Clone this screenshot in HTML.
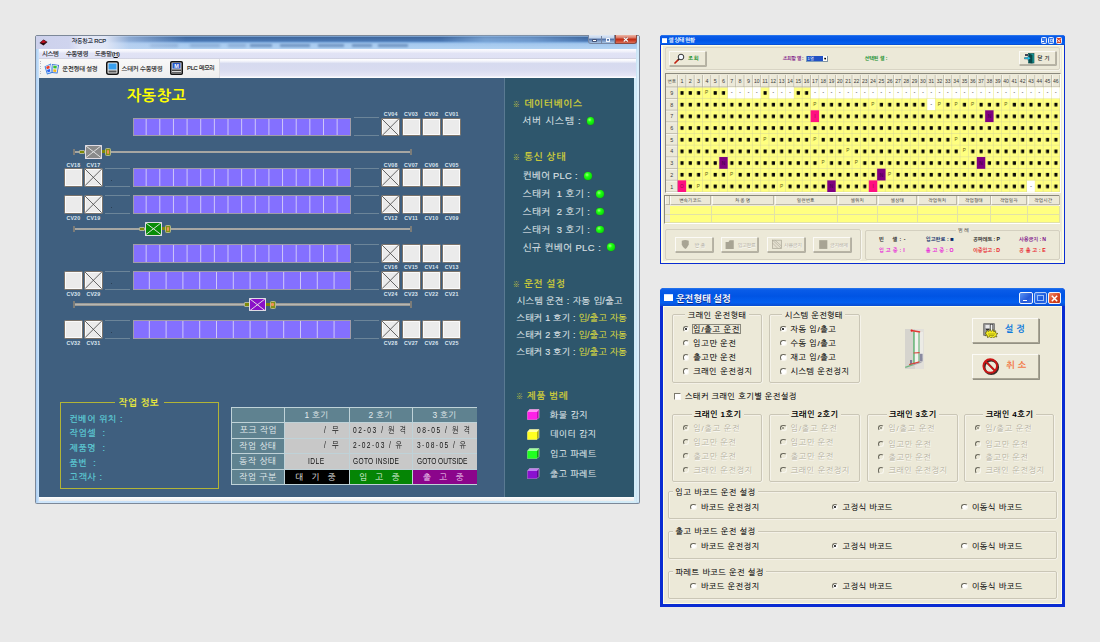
<!DOCTYPE html>
<html lang="ko"><head><meta charset="utf-8"><title>자동창고 RCP</title>
<style>
html,body{margin:0;padding:0;}
body{width:1100px;height:642px;overflow:hidden;background:#e9e9e9;position:relative;font-family:"Liberation Sans","NanumGothic",sans-serif;}
body div,body svg.a{position:absolute;}
.t{position:absolute;white-space:nowrap;line-height:1.25;}

.w7{position:absolute;box-sizing:border-box;border:.8px solid #7c8898;border-radius:2px 2px 1.5px 1.5px;background:linear-gradient(90deg,#a8ccf2,#cfe6fb .5%,#b6d6f6 50%,#d4ecf8 99.5%,#a8c8e8);}
.rack{position:absolute;box-sizing:border-box;background-color:#8470ff;border:1px solid #a09ca8;background-image:linear-gradient(90deg,transparent calc(100% - 1px),#cfc8f8 calc(100% - 1px));background-position:-1px 0;}
.cv{position:absolute;width:18.7px;height:18.7px;margin:-.2px 0 0 -.2px;box-sizing:border-box;border:1.2px solid #7a736b;border-radius:1.6px;background:#ebebeb;box-shadow:0 0 0 1px #fbfbfb inset;}
.cvl{position:absolute;width:20px;text-align:center;font-size:5.3px;font-weight:bold;letter-spacing:.15px;line-height:6px;color:#dce6f0;white-space:nowrap;}
.seg{position:absolute;box-sizing:border-box;border-top:1.3px solid #6c8599;border-bottom:1.3px solid #6c8599;}
.led{position:absolute;width:7.8px;height:7.8px;border-radius:50%;background:radial-gradient(circle at 38% 35%,#a0ff80 0,#20ff10 30%,#08e008 70%,#10a010 100%);box-shadow:0 0 0 .6px #2a6a3a;}
.tc{position:absolute;white-space:nowrap;overflow:hidden;}

.rd{position:absolute;width:6.5px;height:6.5px;border-radius:50%;box-sizing:border-box;border:1px solid;border-color:#6a685c #f8f6ee #f8f6ee #6a685c;transform:rotate(0deg);}

</style></head><body>
<div class="w7" style="left:35px;top:35px;width:604.8px;height:469.4px;">
</div>
<div style="left:36px;top:36px;width:603px;height:12.5px;background:linear-gradient(180deg,#9cc0e8 0%,#40689e 10%,#4a78b4 38%,#7eaadc 50%,#a4c8ee 60%,#b2d2f2 100%);"></div>
<div style="left:440px;top:36px;width:150px;height:7px;background:linear-gradient(90deg,rgba(160,200,240,0),rgba(160,200,240,.55) 30%,rgba(150,190,235,.5) 60%,rgba(160,200,240,0));filter:blur(1.5px);"></div>
<div style="left:250px;top:44.3px;width:22px;height:2.6px;background:#5f84b4;filter:blur(1.2px);opacity:.75"></div>
<div style="left:280px;top:44.3px;width:30px;height:2.6px;background:#5f84b4;filter:blur(1.2px);opacity:.75"></div>
<div style="left:318px;top:44.3px;width:26px;height:2.6px;background:#5f84b4;filter:blur(1.2px);opacity:.75"></div>
<div style="left:352px;top:44.3px;width:20px;height:2.6px;background:#5f84b4;filter:blur(1.2px);opacity:.75"></div>
<div style="left:378px;top:44.3px;width:30px;height:2.6px;background:#5f84b4;filter:blur(1.2px);opacity:.75"></div>
<div style="left:150px;top:44.3px;width:28px;height:2.6px;background:#7a9cc8;filter:blur(1.4px);opacity:.7"></div>
<div style="left:190px;top:44.3px;width:30px;height:2.6px;background:#7a9cc8;filter:blur(1.4px);opacity:.7"></div>
<div style="left:228px;top:44.3px;width:18px;height:2.6px;background:#7a9cc8;filter:blur(1.4px);opacity:.7"></div>
<div style="left:36px;top:36px;width:150px;height:12.5px;background:linear-gradient(90deg,#cdd1ec 0%,#cfd4ee 22%,#e4e8f6 30%,#e0e6f6 46%,rgba(190,210,240,.6) 62%,rgba(170,200,235,0) 100%);"></div>
<svg class="a" style="left:38.5px;top:38.5px" width="9" height="7" viewBox="0 0 18 14"><path d="M1 8 L9 1 L17 6 L9 13 Z" fill="#2a0a10"/><path d="M3 7 L9 2 L15 6 L9 8 Z" fill="#c01020"/></svg>
<div class="t" style="left:71.7px;top:38.4px;font-size:5.8px;color:#101828;-webkit-text-stroke:.15px #101828;letter-spacing:-0.170px;">자동창고 RCP</div>
<div style="left:588px;top:35.4px;width:27px;height:8.9px;border-radius:0 0 0 3px;background:linear-gradient(180deg,#dfe9f6 0,#c0d2ea 38%,#4a6aa2 52%,#6c8cbc 64%,#a8c4e4 100%);border:0.5px solid #7888a4;border-top:0;box-sizing:border-box;"></div>
<div style="left:614.6px;top:35.4px;width:22.4px;height:8.9px;border-radius:0 0 3px 0;background:linear-gradient(180deg,#ecb8a8 0,#dc7864 35%,#c02a12 52%,#c83a22 66%,#dc7058 100%);border:0.5px solid #8a4a40;border-top:0;box-sizing:border-box;"></div>
<div style="left:601px;top:35.6px;width:0.6px;height:8.4px;background:#7484a0"></div>
<div style="left:592.3px;top:39.4px;width:5px;height:2.2px;background:#fff;border:0.4px solid #445478;border-radius:.8px;box-sizing:border-box;"></div>
<div style="left:605.6px;top:38.2px;width:4.6px;height:3.8px;border:0.9px solid #f4f6fc;box-sizing:border-box;border-radius:.5px;"></div>
<svg class="a" style="left:623.2px;top:37.4px" width="5.6" height="5.2" viewBox="0 0 5.6 5.2"><path d="M0.7 0.6L4.9 4.6M4.9 0.6L0.7 4.6" stroke="#3a1a1a" stroke-width="2" opacity=".5"/><path d="M0.7 0.6L4.9 4.6M4.9 0.6L0.7 4.6" stroke="#fff" stroke-width="1.3"/></svg>
<div style="left:38.8px;top:48.5px;width:597.4px;height:10px;background:linear-gradient(180deg,#fcfcff 0,#f2f3fb 22%,#e1e3f5 45%,#dfe1f4 88%,#c9cad6 100%);"></div>
<div class="t" style="left:42px;top:50.2px;font-size:6.2px;color:#111;-webkit-text-stroke:.15px #111;letter-spacing:-0.284px;">시스템</div>
<div class="t" style="left:66px;top:50.2px;font-size:6.2px;color:#111;-webkit-text-stroke:.15px #111;letter-spacing:-0.266px;">수동명령</div>
<div class="t" style="left:95px;top:50.2px;font-size:6.2px;color:#111;-webkit-text-stroke:.15px #111;letter-spacing:-0.241px;">도움말(<u>H</u>)</div>
<div style="left:38.8px;top:58.5px;width:597.4px;height:19.2px;background:linear-gradient(180deg,#ffffff 0,#f6f7fc 10%,#d6daef 24%,#d9dcf0 60%,#e5e6f5 88%,#fbfbfe 96%);"></div>
<div style="left:38.8px;top:58.5px;width:181.6px;height:19.2px;background:linear-gradient(180deg,#f8f8f8,#eeeeee);border-right:1.2px solid #dcdce0;box-sizing:border-box;"></div>
<div style="left:40px;top:60.5px;width:1px;height:15px;background:repeating-linear-gradient(180deg,#b8b8c0 0 1px,transparent 1px 2.5px);"></div>
<svg class="a" style="left:43.6px;top:61.6px" width="16" height="13" viewBox="0 0 32 26"><path d="M1 9 L14 3 L16 22 L6 25 Z" fill="#2f7de0"/><path d="M16 4 L30 6 L27 23 L16 22 Z" fill="#2a6ad0"/><path d="M3 9 L13 5 L15 20 L7 23 Z" fill="#dfeaff"/><path d="M17 5.5 L28 7 L26 21 L17 20.5 Z" fill="#e8f0ff"/><path d="M4.4 9.6 L10.6 7 L11.4 12.4 L5.6 14.6 Z" fill="#f03a20"/><path d="M6 16 L11.8 14 L12.6 19 L7.4 21 Z" fill="#2a62f0"/><path d="M18.6 7 L25.6 8 L25 13 L18.6 12.4 Z" fill="#38c030"/><path d="M18.6 14.4 L24.8 15 L24.2 20 L18.6 19.6 Z" fill="#f8b818"/></svg>
<div class="t" style="left:62.3px;top:64.6px;font-size:6.2px;color:#111;-webkit-text-stroke:.15px #111;letter-spacing:-0.204px;">운전형태 설정</div>
<svg class="a" style="left:105.5px;top:61px" width="13" height="14" viewBox="0 0 26 28"><rect x="1.5" y="1.5" width="23" height="25" rx="4" fill="#e8e8e8" stroke="#111" stroke-width="3"/><rect x="5" y="5" width="16" height="12" fill="#38a0f0"/><rect x="5" y="19" width="16" height="4" fill="#555"/></svg>
<div class="t" style="left:121.6px;top:64.6px;font-size:6.2px;color:#111;-webkit-text-stroke:.15px #111;letter-spacing:-0.180px;">스태커 수동명령</div>
<svg class="a" style="left:170px;top:61px" width="13" height="14" viewBox="0 0 26 28"><rect x="1.5" y="1.5" width="23" height="25" rx="2" fill="#d8d8d8" stroke="#111" stroke-width="3"/><rect x="5" y="4" width="16" height="11" fill="#2858c8"/><text x="13" y="13.5" font-size="11" font-weight="bold" fill="#fff" text-anchor="middle" font-family="Liberation Sans, sans-serif">M</text><rect x="4" y="17" width="18" height="3" fill="#444"/><rect x="4" y="22" width="18" height="3" fill="#666"/></svg>
<div class="t" style="left:187px;top:64.8px;font-size:5.8px;color:#111;-webkit-text-stroke:.15px #111;letter-spacing:-0.236px;">PLC 메모리</div>
<div style="left:39px;top:496.8px;width:595.4px;height:4.2px;background:linear-gradient(180deg,#fdfdfd,#ececec);"></div>
<div style="left:636.8px;top:36px;width:2.4px;height:466px;background:linear-gradient(180deg,#c8e4f8,#e0f2fc 10%,#d8ecf8);"></div>
<div style="left:38.8px;top:78px;width:595.2px;height:418.6px;background:#3f5f7f;"></div>
<div style="left:503.7px;top:78px;width:130.3px;height:418.6px;background:#2e566c;border-left:1px solid #5a7a92;box-sizing:border-box;"></div>
<div class="t" style="left:127px;top:86.2px;font-size:15.2px;font-weight:bold;color:#ffff00;letter-spacing:0.573px;">자동창고</div>
<div class="rack" style="left:132.9px;top:117.6px;width:218.5px;height:18.8px;background-size:13.6562px 100%;"></div>
<div class="rack" style="left:132.9px;top:168.2px;width:218.5px;height:18.8px;background-size:13.6562px 100%;"></div>
<div class="rack" style="left:132.9px;top:195.1px;width:218.5px;height:18.8px;background-size:13.6562px 100%;"></div>
<div class="rack" style="left:132.9px;top:244.1px;width:218.5px;height:18.8px;background-size:13.6562px 100%;"></div>
<div class="rack" style="left:132.9px;top:271px;width:218.5px;height:18.8px;background-size:16.8077px 100%;"></div>
<div class="rack" style="left:132.9px;top:320.2px;width:218.5px;height:18.8px;background-size:16.8077px 100%;"></div>
<div class="cv" style="left:64.4px;top:168.5px;"></div>
<div class="cvl" style="left:63.4px;top:161.7px;">CV18</div>
<div class="cv" style="left:84.4px;top:168.5px;"><svg width="100%" height="100%" viewBox="0 0 16 16" preserveAspectRatio="none" style="display:block"><path d="M0 0L16 16M16 0L0 16" stroke="#4a4a4a" stroke-width=".8" fill="none"/></svg></div>
<div class="cvl" style="left:83.4px;top:161.7px;">CV17</div>
<div class="seg" style="left:105px;top:167.6px;width:24.6px;height:19.6px;"></div>
<div style="left:111.2px;top:180px;width:0.8px;height:0.8px;background:#2a3f55"></div>
<div class="cv" style="left:64.4px;top:195.6px;"></div>
<div class="cvl" style="left:63.4px;top:215.4px;">CV20</div>
<div class="cv" style="left:84.4px;top:195.6px;"><svg width="100%" height="100%" viewBox="0 0 16 16" preserveAspectRatio="none" style="display:block"><path d="M0 0L16 16M16 0L0 16" stroke="#4a4a4a" stroke-width=".8" fill="none"/></svg></div>
<div class="cvl" style="left:83.4px;top:215.4px;">CV19</div>
<div class="seg" style="left:105px;top:194.7px;width:24.6px;height:19.6px;"></div>
<div style="left:111.2px;top:207.1px;width:0.8px;height:0.8px;background:#2a3f55"></div>
<div class="cv" style="left:64.4px;top:271.4px;"></div>
<div class="cvl" style="left:63.4px;top:291.2px;">CV30</div>
<div class="cv" style="left:84.4px;top:271.4px;"><svg width="100%" height="100%" viewBox="0 0 16 16" preserveAspectRatio="none" style="display:block"><path d="M0 0L16 16M16 0L0 16" stroke="#4a4a4a" stroke-width=".8" fill="none"/></svg></div>
<div class="cvl" style="left:83.4px;top:291.2px;">CV29</div>
<div class="seg" style="left:105px;top:270.5px;width:24.6px;height:19.6px;"></div>
<div style="left:111.2px;top:282.9px;width:0.8px;height:0.8px;background:#2a3f55"></div>
<div class="cv" style="left:64.4px;top:320.5px;"></div>
<div class="cvl" style="left:63.4px;top:340.3px;">CV32</div>
<div class="cv" style="left:84.4px;top:320.5px;"><svg width="100%" height="100%" viewBox="0 0 16 16" preserveAspectRatio="none" style="display:block"><path d="M0 0L16 16M16 0L0 16" stroke="#4a4a4a" stroke-width=".8" fill="none"/></svg></div>
<div class="cvl" style="left:83.4px;top:340.3px;">CV31</div>
<div class="seg" style="left:105px;top:319.6px;width:24.6px;height:19.6px;"></div>
<div style="left:111.2px;top:332px;width:0.8px;height:0.8px;background:#2a3f55"></div>
<div class="cv" style="left:381.6px;top:117.8px;"><svg width="100%" height="100%" viewBox="0 0 16 16" preserveAspectRatio="none" style="display:block"><path d="M0 0L16 16M16 0L0 16" stroke="#4a4a4a" stroke-width=".8" fill="none"/></svg></div>
<div class="cvl" style="left:380.6px;top:111px;">CV04</div>
<div class="cv" style="left:402px;top:117.8px;"></div>
<div class="cvl" style="left:401px;top:111px;">CV03</div>
<div class="cv" style="left:422.4px;top:117.8px;"></div>
<div class="cvl" style="left:421.4px;top:111px;">CV02</div>
<div class="cv" style="left:442.6px;top:117.8px;"></div>
<div class="cvl" style="left:441.6px;top:111px;">CV01</div>
<div class="seg" style="left:354.2px;top:116.9px;width:25px;height:19.6px;"></div>
<div class="cv" style="left:381.6px;top:168.5px;"><svg width="100%" height="100%" viewBox="0 0 16 16" preserveAspectRatio="none" style="display:block"><path d="M0 0L16 16M16 0L0 16" stroke="#4a4a4a" stroke-width=".8" fill="none"/></svg></div>
<div class="cvl" style="left:380.6px;top:161.7px;">CV08</div>
<div class="cv" style="left:402px;top:168.5px;"></div>
<div class="cvl" style="left:401px;top:161.7px;">CV07</div>
<div class="cv" style="left:422.4px;top:168.5px;"></div>
<div class="cvl" style="left:421.4px;top:161.7px;">CV06</div>
<div class="cv" style="left:442.6px;top:168.5px;"></div>
<div class="cvl" style="left:441.6px;top:161.7px;">CV05</div>
<div class="seg" style="left:354.2px;top:167.6px;width:25px;height:19.6px;"></div>
<div class="cv" style="left:381.6px;top:195.6px;"><svg width="100%" height="100%" viewBox="0 0 16 16" preserveAspectRatio="none" style="display:block"><path d="M0 0L16 16M16 0L0 16" stroke="#4a4a4a" stroke-width=".8" fill="none"/></svg></div>
<div class="cvl" style="left:380.6px;top:215.4px;">CV12</div>
<div class="cv" style="left:402px;top:195.6px;"></div>
<div class="cvl" style="left:401px;top:215.4px;">CV11</div>
<div class="cv" style="left:422.4px;top:195.6px;"></div>
<div class="cvl" style="left:421.4px;top:215.4px;">CV10</div>
<div class="cv" style="left:442.6px;top:195.6px;"></div>
<div class="cvl" style="left:441.6px;top:215.4px;">CV09</div>
<div class="seg" style="left:354.2px;top:194.7px;width:25px;height:19.6px;"></div>
<div class="cv" style="left:381.6px;top:244.6px;"><svg width="100%" height="100%" viewBox="0 0 16 16" preserveAspectRatio="none" style="display:block"><path d="M0 0L16 16M16 0L0 16" stroke="#4a4a4a" stroke-width=".8" fill="none"/></svg></div>
<div class="cvl" style="left:380.6px;top:264.4px;">CV16</div>
<div class="cv" style="left:402px;top:244.6px;"></div>
<div class="cvl" style="left:401px;top:264.4px;">CV15</div>
<div class="cv" style="left:422.4px;top:244.6px;"></div>
<div class="cvl" style="left:421.4px;top:264.4px;">CV14</div>
<div class="cv" style="left:442.6px;top:244.6px;"></div>
<div class="cvl" style="left:441.6px;top:264.4px;">CV13</div>
<div class="seg" style="left:354.2px;top:243.7px;width:25px;height:19.6px;"></div>
<div class="cv" style="left:381.6px;top:271.4px;"><svg width="100%" height="100%" viewBox="0 0 16 16" preserveAspectRatio="none" style="display:block"><path d="M0 0L16 16M16 0L0 16" stroke="#4a4a4a" stroke-width=".8" fill="none"/></svg></div>
<div class="cvl" style="left:380.6px;top:291.2px;">CV24</div>
<div class="cv" style="left:402px;top:271.4px;"></div>
<div class="cvl" style="left:401px;top:291.2px;">CV23</div>
<div class="cv" style="left:422.4px;top:271.4px;"></div>
<div class="cvl" style="left:421.4px;top:291.2px;">CV22</div>
<div class="cv" style="left:442.6px;top:271.4px;"></div>
<div class="cvl" style="left:441.6px;top:291.2px;">CV21</div>
<div class="seg" style="left:354.2px;top:270.5px;width:25px;height:19.6px;"></div>
<div class="cv" style="left:381.6px;top:320.5px;"><svg width="100%" height="100%" viewBox="0 0 16 16" preserveAspectRatio="none" style="display:block"><path d="M0 0L16 16M16 0L0 16" stroke="#4a4a4a" stroke-width=".8" fill="none"/></svg></div>
<div class="cvl" style="left:380.6px;top:340.3px;">CV28</div>
<div class="cv" style="left:402px;top:320.5px;"></div>
<div class="cvl" style="left:401px;top:340.3px;">CV27</div>
<div class="cv" style="left:422.4px;top:320.5px;"></div>
<div class="cvl" style="left:421.4px;top:340.3px;">CV26</div>
<div class="cv" style="left:442.6px;top:320.5px;"></div>
<div class="cvl" style="left:441.6px;top:340.3px;">CV25</div>
<div class="seg" style="left:354.2px;top:319.6px;width:25px;height:19.6px;"></div>
<div style="left:73.6px;top:150.65px;width:337.4px;height:2.5px;background:linear-gradient(180deg,#80807c,#b6b6b2 35%,#b6b6b2 65%,#80807c);"></div><div style="left:72.8px;top:148.6px;width:1.8px;height:6.6px;background:#bcbcb8;border:.4px solid #7c7c78;box-sizing:border-box;"></div><div style="left:410.1px;top:148.6px;width:1.8px;height:6.6px;background:#bcbcb8;border:.4px solid #7c7c78;box-sizing:border-box;"></div><div style="left:79.4px;top:149.7px;width:5.8px;height:4.4px;background:#7e8a08;border:.6px solid #b0b49a;border-radius:1px;box-sizing:border-box;"></div><div style="left:101.8px;top:150.4px;width:4px;height:3px;background:#7e8a08;"></div><div style="left:105.1px;top:147.9px;width:6.2px;height:8px;background:#849018;border:.7px solid #b4b88a;border-radius:1.4px;box-sizing:border-box;"></div><div style="left:107px;top:150px;width:2.2px;height:3.8px;background:#f49058;border-radius:1px;"></div><div class="a" style="left:84.9px;top:145.1px;width:16.9px;height:13.5px;box-sizing:border-box;border:.9px solid #e0dce4;border-radius:.5px;background:#8a8a8a;"><svg width="100%" height="100%" viewBox="0 0 14 11" preserveAspectRatio="none" style="display:block"><path d="M0 0L14 11M14 0L0 11" stroke="#e4e4e4" stroke-width=".9" fill="none"/></svg></div>
<div style="left:73.6px;top:227.55px;width:337.4px;height:2.5px;background:linear-gradient(180deg,#80807c,#b6b6b2 35%,#b6b6b2 65%,#80807c);"></div><div style="left:72.8px;top:225.5px;width:1.8px;height:6.6px;background:#bcbcb8;border:.4px solid #7c7c78;box-sizing:border-box;"></div><div style="left:410.1px;top:225.5px;width:1.8px;height:6.6px;background:#bcbcb8;border:.4px solid #7c7c78;box-sizing:border-box;"></div><div style="left:139.4px;top:226.6px;width:5.8px;height:4.4px;background:#7e8a08;border:.6px solid #b0b49a;border-radius:1px;box-sizing:border-box;"></div><div style="left:161.8px;top:227.3px;width:4px;height:3px;background:#7e8a08;"></div><div style="left:165.1px;top:224.8px;width:6.2px;height:8px;background:#849018;border:.7px solid #b4b88a;border-radius:1.4px;box-sizing:border-box;"></div><div style="left:167px;top:226.9px;width:2.2px;height:3.8px;background:#f49058;border-radius:1px;"></div><div class="a" style="left:144.9px;top:222px;width:16.9px;height:13.5px;box-sizing:border-box;border:.9px solid #e0dce4;border-radius:.5px;background:#088c08;"><svg width="100%" height="100%" viewBox="0 0 14 11" preserveAspectRatio="none" style="display:block"><path d="M0 0L14 11M14 0L0 11" stroke="#e4e4e4" stroke-width=".9" fill="none"/></svg></div>
<div style="left:73.6px;top:303.25px;width:337.4px;height:2.5px;background:linear-gradient(180deg,#80807c,#b6b6b2 35%,#b6b6b2 65%,#80807c);"></div><div style="left:72.8px;top:301.2px;width:1.8px;height:6.6px;background:#bcbcb8;border:.4px solid #7c7c78;box-sizing:border-box;"></div><div style="left:410.1px;top:301.2px;width:1.8px;height:6.6px;background:#bcbcb8;border:.4px solid #7c7c78;box-sizing:border-box;"></div><div style="left:243.8px;top:302.3px;width:5.8px;height:4.4px;background:#7e8a08;border:.6px solid #b0b49a;border-radius:1px;box-sizing:border-box;"></div><div style="left:266.2px;top:303px;width:4px;height:3px;background:#7e8a08;"></div><div style="left:269.5px;top:300.5px;width:6.2px;height:8px;background:#849018;border:.7px solid #b4b88a;border-radius:1.4px;box-sizing:border-box;"></div><div style="left:271.4px;top:302.6px;width:2.2px;height:3.8px;background:#f49058;border-radius:1px;"></div><div class="a" style="left:249.3px;top:297.7px;width:16.9px;height:13.5px;box-sizing:border-box;border:.9px solid #e0dce4;border-radius:.5px;background:#8a10c8;"><svg width="100%" height="100%" viewBox="0 0 14 11" preserveAspectRatio="none" style="display:block"><path d="M0 0L14 11M14 0L0 11" stroke="#e4e4e4" stroke-width=".9" fill="none"/></svg></div>
<div class="t" style="left:512.5px;top:97.5px;font-size:9.6px;font-weight:bold;color:#c8c83c;letter-spacing:0.736px;"><span style="font-size:8px;font-weight:normal">※</span> 데이터베이스</div>
<div class="t" style="left:522.3px;top:115.4px;font-size:9.4px;color:#dce0e4;-webkit-text-stroke:.15px #dce0e4;letter-spacing:0.926px;">서버 시스템 :</div>
<div class="led" style="left:586.5px;top:116.8px;"></div>
<div class="t" style="left:512.5px;top:150.5px;font-size:9.6px;font-weight:bold;color:#c8c83c;letter-spacing:0.637px;"><span style="font-size:8px;font-weight:normal">※</span> 통신 상태</div>
<div class="t" style="left:522.7px;top:170.4px;font-size:9.4px;color:#dce0e4;-webkit-text-stroke:.15px #dce0e4;letter-spacing:0.311px;">컨베어 PLC :</div>
<div class="led" style="left:583.8px;top:171.8px;"></div>
<div class="t" style="left:522.7px;top:188.4px;font-size:9.4px;color:#dce0e4;-webkit-text-stroke:.15px #dce0e4;letter-spacing:0.490px;">스태커&nbsp; 1 호기 :</div>
<div class="led" style="left:596.1px;top:189.8px;"></div>
<div class="t" style="left:522.7px;top:206.3px;font-size:9.4px;color:#dce0e4;-webkit-text-stroke:.15px #dce0e4;letter-spacing:0.490px;">스태커&nbsp; 2 호기 :</div>
<div class="led" style="left:596.1px;top:207.7px;"></div>
<div class="t" style="left:522.7px;top:224.2px;font-size:9.4px;color:#dce0e4;-webkit-text-stroke:.15px #dce0e4;letter-spacing:0.490px;">스태커&nbsp; 3 호기 :</div>
<div class="led" style="left:596.1px;top:225.6px;"></div>
<div class="t" style="left:522.7px;top:241.8px;font-size:9.4px;color:#dce0e4;-webkit-text-stroke:.15px #dce0e4;letter-spacing:0.489px;">신규 컨베어 PLC :</div>
<div class="led" style="left:606.8px;top:243.1px;"></div>
<div class="t" style="left:512.5px;top:277.9px;font-size:9.6px;font-weight:bold;color:#c8c83c;letter-spacing:0.595px;"><span style="font-size:8px;font-weight:normal">※</span> 운전 설정</div>
<div class="t" style="left:516.5px;top:296px;font-size:9px;color:#dce0e4;-webkit-text-stroke:.15px;letter-spacing:0.431px;">시스템 운전 : 자동 입/출고</div>
<div class="t" style="left:516.5px;top:313px;font-size:9px;color:#dce0e4;-webkit-text-stroke:.15px;letter-spacing:0.188px;">스태커 1 호기 : <span style="color:#d8d840">입/출고 자동</span></div>
<div class="t" style="left:516.5px;top:329.8px;font-size:9px;color:#dce0e4;-webkit-text-stroke:.15px;letter-spacing:0.188px;">스태커 2 호기 : <span style="color:#d8d840">입/출고 자동</span></div>
<div class="t" style="left:516.5px;top:346.6px;font-size:9px;color:#dce0e4;-webkit-text-stroke:.15px;letter-spacing:0.188px;">스태커 3 호기 : <span style="color:#d8d840">입/출고 자동</span></div>
<div class="t" style="left:515.7px;top:390.4px;font-size:9.4px;font-weight:bold;color:#c8c83c;letter-spacing:0.614px;"><span style="font-size:8px;font-weight:normal">※</span> 제품 범례</div>
<svg class="a" style="left:527px;top:409.2px" width="12.5" height="11" viewBox="0 0 25 22"><path d="M1 6 L5 1 L24 1 L24 17 L20 21 L1 21 Z" fill="#c010b0" stroke="#d8d8d8" stroke-width="1.2"/><path d="M1 6 L5 1 L24 1 L20 6 Z" fill="#ff90f4"/><rect x="1" y="6" width="19" height="15" fill="#ff20e8"/></svg>
<div class="t" style="left:550px;top:409.8px;font-size:8.8px;color:#dce0e4;-webkit-text-stroke:.15px;letter-spacing:0.494px;">화물 감지</div>
<svg class="a" style="left:527px;top:428.8px" width="12.5" height="11" viewBox="0 0 25 22"><path d="M1 6 L5 1 L24 1 L24 17 L20 21 L1 21 Z" fill="#b0b010" stroke="#d8d8d8" stroke-width="1.2"/><path d="M1 6 L5 1 L24 1 L20 6 Z" fill="#ffffa0"/><rect x="1" y="6" width="19" height="15" fill="#ffff20"/></svg>
<div class="t" style="left:550px;top:429.4px;font-size:8.8px;color:#dce0e4;-webkit-text-stroke:.15px;letter-spacing:0.434px;">데이터 감지</div>
<svg class="a" style="left:527px;top:448.4px" width="12.5" height="11" viewBox="0 0 25 22"><path d="M1 6 L5 1 L24 1 L24 17 L20 21 L1 21 Z" fill="#10a010" stroke="#d8d8d8" stroke-width="1.2"/><path d="M1 6 L5 1 L24 1 L20 6 Z" fill="#a0ffa0"/><rect x="1" y="6" width="19" height="15" fill="#20ff20"/></svg>
<div class="t" style="left:550px;top:449px;font-size:8.8px;color:#dce0e4;-webkit-text-stroke:.15px;letter-spacing:0.517px;">입고 파레트</div>
<svg class="a" style="left:527px;top:468px" width="12.5" height="11" viewBox="0 0 25 22"><path d="M1 6 L5 1 L24 1 L24 17 L20 21 L1 21 Z" fill="#5a0890" stroke="#d8d8d8" stroke-width="1.2"/><path d="M1 6 L5 1 L24 1 L20 6 Z" fill="#c080f0"/><rect x="1" y="6" width="19" height="15" fill="#8a10d0"/></svg>
<div class="t" style="left:550px;top:468.6px;font-size:8.8px;color:#dce0e4;-webkit-text-stroke:.15px;letter-spacing:0.517px;">출고 파레트</div>
<div style="left:60.4px;top:402px;width:158.4px;height:86.7px;border:1.3px solid #b2b436;box-sizing:border-box;"></div>
<div style="left:114.5px;top:400px;width:49px;height:5px;background:#3f5f7f;"></div>
<div class="t" style="left:118.8px;top:397.2px;font-size:9.4px;font-weight:bold;color:#e8e83c;letter-spacing:0.468px;">작업 정보</div>
<div class="t" style="left:69.5px;top:413.6px;font-size:8.8px;color:#5ecdd6;-webkit-text-stroke:.22px #5ecdd6;letter-spacing:0.602px;">컨베어 위치 :</div>
<div class="t" style="left:69.5px;top:428.3px;font-size:8.8px;color:#5ecdd6;-webkit-text-stroke:.22px #5ecdd6;letter-spacing:0.643px;">작업셀&nbsp; :</div>
<div class="t" style="left:69.5px;top:443px;font-size:8.8px;color:#5ecdd6;-webkit-text-stroke:.22px #5ecdd6;letter-spacing:0.643px;">제품명&nbsp; :</div>
<div class="t" style="left:69.5px;top:457.7px;font-size:8.8px;color:#5ecdd6;-webkit-text-stroke:.22px #5ecdd6;letter-spacing:0.565px;">품번&nbsp; :</div>
<div class="t" style="left:69.5px;top:472.4px;font-size:8.8px;color:#5ecdd6;-webkit-text-stroke:.22px #5ecdd6;letter-spacing:0.699px;">고객사 :</div>
<div style="left:230.8px;top:407px;width:246.6px;height:78px;background:#bfd2d8;"></div>
<div style="left:231.6px;top:408px;width:52.8px;height:13.9px;background:#5f8290;color:#e4ecee;"></div>
<div style="left:285.4px;top:408px;width:63.2px;height:13.9px;background:#5f8290;color:#e4ecee;"></div>
<div style="left:349.6px;top:408px;width:62.7px;height:13.9px;background:#5f8290;color:#e4ecee;"></div>
<div style="left:413.3px;top:408px;width:63.3px;height:13.9px;background:#5f8290;color:#e4ecee;"></div>
<div style="left:231.6px;top:422.9px;width:52.8px;height:14.8px;background:#5f8290;color:#e4ecee;"></div>
<div style="left:231.6px;top:438.7px;width:52.8px;height:14.4px;background:#5f8290;color:#e4ecee;"></div>
<div style="left:231.6px;top:454.1px;width:52.8px;height:14.5px;background:#5f8290;color:#e4ecee;"></div>
<div style="left:231.6px;top:469.6px;width:52.8px;height:14.6px;background:#5f8290;color:#e4ecee;"></div>
<div style="left:285.4px;top:422.9px;width:63.2px;height:14.8px;background:#c8c8c8;color:#222;"></div>
<div style="left:349.6px;top:422.9px;width:62.7px;height:14.8px;background:#c8c8c8;color:#222;"></div>
<div style="left:413.3px;top:422.9px;width:63.3px;height:14.8px;background:#c8c8c8;color:#222;"></div>
<div style="left:285.4px;top:438.7px;width:63.2px;height:14.4px;background:#c8c8c8;color:#222;"></div>
<div style="left:349.6px;top:438.7px;width:62.7px;height:14.4px;background:#c8c8c8;color:#222;"></div>
<div style="left:413.3px;top:438.7px;width:63.3px;height:14.4px;background:#c8c8c8;color:#222;"></div>
<div style="left:285.4px;top:454.1px;width:63.2px;height:14.5px;background:#c8c8c8;color:#222;"></div>
<div style="left:349.6px;top:454.1px;width:62.7px;height:14.5px;background:#c8c8c8;color:#222;"></div>
<div style="left:413.3px;top:454.1px;width:63.3px;height:14.5px;background:#c8c8c8;color:#222;"></div>
<div style="left:285.4px;top:469.6px;width:63.2px;height:14.6px;background:#000;"></div>
<div style="left:349.6px;top:469.6px;width:62.7px;height:14.6px;background:#058505;"></div>
<div style="left:413.3px;top:469.6px;width:63.3px;height:14.6px;background:#8b058b;"></div>
<div class="t" style="left:304.5px;top:409.55px;font-size:8.4px;color:#e4ecee;letter-spacing:0.316px;">1 호기</div>
<div class="t" style="left:368.45px;top:409.55px;font-size:8.4px;color:#e4ecee;letter-spacing:0.316px;">2 호기</div>
<div class="t" style="left:432.45px;top:409.55px;font-size:8.4px;color:#e4ecee;letter-spacing:0.316px;">3 호기</div>
<div class="t" style="left:239.8px;top:425.1px;font-size:8.8px;color:#e4ecee;letter-spacing:0.294px;">포크 작업</div>
<div class="t" style="left:239px;top:440.7px;font-size:8.8px;color:#e4ecee;letter-spacing:0.454px;">작업 상태</div>
<div class="t" style="left:239px;top:456.15px;font-size:8.8px;color:#e4ecee;letter-spacing:0.454px;">동작 상태</div>
<div class="t" style="left:239px;top:471.7px;font-size:8.8px;color:#e4ecee;letter-spacing:0.454px;">작업 구분</div>
<div class="t" style="left:324px;top:426.8px;font-size:6.6px;color:#111;transform:scale(1,1.26);transform-origin:0 60%;letter-spacing:2.178px;">/ <span style="font-size:7px;line-height:0">무</span></div>
<div class="t" style="left:324px;top:442.4px;font-size:6.6px;color:#111;transform:scale(1,1.26);transform-origin:0 60%;letter-spacing:2.178px;">/ <span style="font-size:7px;line-height:0">무</span></div>
<div class="t" style="left:307.9px;top:457.85px;font-size:6.6px;color:#111;transform:scale(1,1.26);transform-origin:0 60%;letter-spacing:0.532px;">IDLE</div>
<div class="t" style="left:353.1px;top:426.8px;font-size:6.6px;color:#111;transform:scale(1,1.26);transform-origin:0 60%;letter-spacing:1.563px;">02-03 / <span style="font-size:7px;line-height:0">원</span> <span style="font-size:7px;line-height:0">격</span></div>
<div class="t" style="left:417px;top:426.8px;font-size:6.6px;color:#111;transform:scale(1,1.26);transform-origin:0 60%;letter-spacing:1.563px;">08-05 / <span style="font-size:7px;line-height:0">원</span> <span style="font-size:7px;line-height:0">격</span></div>
<div class="t" style="left:353.1px;top:442.4px;font-size:6.6px;color:#111;transform:scale(1,1.26);transform-origin:0 60%;letter-spacing:1.416px;">2-02-03 / <span style="font-size:7px;line-height:0">유</span></div>
<div class="t" style="left:417px;top:442.4px;font-size:6.6px;color:#111;transform:scale(1,1.26);transform-origin:0 60%;letter-spacing:1.416px;">3-08-05 / <span style="font-size:7px;line-height:0">유</span></div>
<div class="t" style="left:353.1px;top:457.85px;font-size:6.6px;color:#111;transform:scale(1,1.26);transform-origin:0 60%;letter-spacing:0.280px;">GOTO INSIDE</div>
<div class="t" style="left:417px;top:457.85px;font-size:6.6px;color:#111;transform:scale(1,1.26);transform-origin:0 60%;letter-spacing:-0.003px;">GOTO OUTSIDE</div>
<div class="t" style="left:295.1px;top:471.5px;font-size:8.4px;color:#f0f0f0;letter-spacing:1.266px;">대&nbsp; 기&nbsp; 중</div>
<div class="t" style="left:359.05px;top:471.5px;font-size:8.4px;color:#e8f8e8;letter-spacing:1.266px;">입&nbsp; 고&nbsp; 중</div>
<div class="t" style="left:423.05px;top:471.5px;font-size:8.4px;color:#f4d8f4;letter-spacing:1.266px;">출&nbsp; 고&nbsp; 중</div>
<div style="left:659.9px;top:34.8px;width:405.2px;height:229.2px;background:#0a2cd2;border-radius:3px 3px 0 0;"></div><div style="left:659.9px;top:34.8px;width:405.2px;height:10.2px;border-radius:3px 3px 0 0;background:linear-gradient(180deg,#3a86f0 0%,#0a5ae8 12%,#0054e4 50%,#0660f0 85%,#0a48c8 100%);"></div>
<div style="left:661.2px;top:45.1px;width:402.6px;height:217.5px;background:#fdfde2;"></div>
<div style="left:662.9px;top:46px;width:399.2px;height:214.8px;background:#ece9d8;"></div>
<div style="left:662.1px;top:38.3px;width:4.8px;height:3.4px;background:#fff;border-top:0.6px solid #cfe0ff;"></div>
<div class="t" style="left:668.2px;top:37px;font-size:5.6px;font-weight:bold;color:#fff;letter-spacing:-0.415px;">셀 상태 현황</div>
<div style="left:1040.6px;top:37.2px;width:6.4px;height:6.4px;background:#3c78e8;border:0.6px solid #e8eefc;border-radius:1.4px;box-sizing:border-box;"></div>
<div style="left:1048px;top:37.2px;width:6.4px;height:6.4px;background:#3c78e8;border:0.6px solid #e8eefc;border-radius:1.4px;box-sizing:border-box;"></div>
<div style="left:1055.9px;top:37.2px;width:6.4px;height:6.4px;background:#d8482c;border:0.6px solid #e8eefc;border-radius:1.4px;box-sizing:border-box;"></div>
<div style="left:1042px;top:41.2px;width:2.4px;height:1px;background:#fff;"></div>
<div style="left:1049.6px;top:38.8px;width:3.2px;height:3.2px;border:0.6px solid #9cc0f8;border-top-width:1px;box-sizing:border-box;"></div>
<svg class="a" style="left:1057.3px;top:38.6px" width="3.6" height="3.6" viewBox="0 0 6 6"><path d="M0.5 0.5L5.5 5.5M5.5 0.5L0.5 5.5" stroke="#fff" stroke-width="1.3"/></svg>
<div style="left:664.5px;top:47px;width:395px;height:23.4px;border:1px solid #d8d4c4;border-radius:2px;box-sizing:border-box;box-shadow:0.6px 0.6px 0 #fff;"></div>
<div style="left:668.5px;top:51px;width:37px;height:14.6px;background:#ece9d8;box-sizing:border-box;border-top:1px solid #fbfaf6;border-left:1px solid #fbfaf6;border-right:.8px solid #b8b4a4;border-bottom:.8px solid #b8b4a4;box-shadow:0.6px 0.6px 0 #8e8c80;"></div>
<svg class="a" style="left:673.5px;top:53px" width="11" height="11" viewBox="0 0 22 22"><path d="M2 20 L9 13" stroke="#c02010" stroke-width="3.4" stroke-linecap="round"/><path d="M8 14 L11 11" stroke="#222" stroke-width="3"/><circle cx="14" cy="8" r="5.6" fill="#f4f8ff" stroke="#333" stroke-width="2"/></svg>
<div class="t" style="left:688px;top:55.4px;font-size:5.4px;font-weight:bold;color:#0a8a1a;letter-spacing:-0.414px;">조 회</div>
<div class="t" style="left:782.7px;top:55.4px;font-size:5px;font-weight:bold;color:#80208a;letter-spacing:-0.379px;">조회할 열 :</div>
<div style="left:805.6px;top:55.5px;width:22.4px;height:6.3px;background:#fff;border:0.6px solid #7f9db9;box-sizing:border-box;"></div>
<div style="left:806.5px;top:56.4px;width:16px;height:4.5px;background:#2252c4;"></div>
<div class="t" style="left:807.6px;top:56.2px;font-size:4.2px;color:#fff;line-height:5px;">1열</div>
<div style="left:822.6px;top:56.2px;width:4.8px;height:4.9px;background:#dcd8ca;border:0.5px solid #fff;box-sizing:border-box;box-shadow:0.4px 0.4px 0 #8a887c;"></div>
<svg class="a" style="left:823.8px;top:57.8px" width="2.4" height="1.8" viewBox="0 0 4 3"><path d="M0 0H4L2 3Z" fill="#000"/></svg>
<div class="t" style="left:864.4px;top:55.4px;font-size:5px;font-weight:bold;color:#0a8a1a;letter-spacing:-0.050px;">선택된 셀 :</div>
<div style="left:1018.5px;top:51px;width:37.2px;height:14.4px;background:#ece9d8;box-sizing:border-box;border-top:1px solid #fbfaf6;border-left:1px solid #fbfaf6;border-right:.8px solid #b8b4a4;border-bottom:.8px solid #b8b4a4;box-shadow:0.6px 0.6px 0 #8e8c80;"></div>
<svg class="a" style="left:1023.5px;top:53.2px" width="11" height="10.5" viewBox="0 0 22 21"><rect x="9" y="1" width="11" height="19" fill="#18a0a0" stroke="#0a4a4a" stroke-width="1.2"/><path d="M10 1 L17 4 L17 21 L10 20 Z" fill="#084848"/><path d="M1 9 H8 V6 L13 10.5 L8 15 V12 H1 Z" fill="#28c8e8" stroke="#0a3a5a" stroke-width=".8"/><rect x="2" y="2" width="6" height="4" fill="#445"/></svg>
<div class="t" style="left:1037.6px;top:55.4px;font-size:5.4px;font-weight:bold;color:#222;letter-spacing:-0.014px;">닫 기</div>
<div style="left:664.5px;top:73.2px;width:396.46px;height:119.57px;background:#ece9d8;border:1px solid #8a887c;border-right-color:#fff;border-bottom-color:#fff;box-sizing:border-box;"></div>
<svg class="a" style="left:665.5px;top:74.5px" width="394.26" height="117.37" viewBox="0 0 394.26 117.37" font-family="Liberation Sans, NanumGothic, sans-serif"><defs><pattern id="pc" x="12.0" y="12.25" width="8.31" height="11.68" patternUnits="userSpaceOnUse"><rect width="8.31" height="11.68" fill="#ffff80"/><rect x="7.8100000000000005" width=".5" height="11.68" fill="#d8d898"/><rect y="11.18" width="8.31" height=".5" fill="#d8d898"/><rect x="2.41" y="3.99" width="3.15" height="3.45" rx=".4" fill="#050505"/></pattern><pattern id="ph" x="12.0" y="0" width="8.31" height="12.25" patternUnits="userSpaceOnUse"><rect width="8.31" height="12.25" fill="#ece9d8"/><rect width=".7" height="12.25" fill="#fbfaf4"/><rect x="7.61" width=".7" height="12.25" fill="#b4b0a0"/></pattern><pattern id="pr" x="0" y="12.25" width="12.0" height="11.68" patternUnits="userSpaceOnUse"><rect width="12.0" height="11.68" fill="#ece9d8"/><rect width="12.0" height=".7" fill="#fbfaf4"/><rect y="10.98" width="12.0" height=".7" fill="#b4b0a0"/></pattern></defs><rect x="12.0" y="12.25" width="382.26" height="105.12" fill="url(#pc)"/><rect x="12.0" y="0" width="382.26" height="12.25" fill="url(#ph)"/><rect x="0" y="12.25" width="12.0" height="105.12" fill="url(#pr)"/><rect x="0" y="0" width="12.0" height="12.25" fill="#ece9d8"/><rect x="11.3" y="0" width=".7" height="117.37" fill="#b4b0a0"/><rect x="0" y="11.55" width="394.26" height=".7" fill="#b4b0a0"/><text x="5.7" y="8.125" font-size="4.6" fill="#333" text-anchor="middle">번호</text><text x="15.96" y="8.125" font-size="5.4" fill="#3a3a3a" text-anchor="middle">1</text><text x="24.27" y="8.125" font-size="5.4" fill="#3a3a3a" text-anchor="middle">2</text><text x="32.58" y="8.125" font-size="5.4" fill="#3a3a3a" text-anchor="middle">3</text><text x="40.88" y="8.125" font-size="5.4" fill="#3a3a3a" text-anchor="middle">4</text><text x="49.20" y="8.125" font-size="5.4" fill="#3a3a3a" text-anchor="middle">5</text><text x="57.51" y="8.125" font-size="5.4" fill="#3a3a3a" text-anchor="middle">6</text><text x="65.81" y="8.125" font-size="5.4" fill="#3a3a3a" text-anchor="middle">7</text><text x="74.12" y="8.125" font-size="5.4" fill="#3a3a3a" text-anchor="middle">8</text><text x="82.44" y="8.125" font-size="5.4" fill="#3a3a3a" text-anchor="middle">9</text><text x="90.75" y="8.125" font-size="5.4" fill="#3a3a3a" text-anchor="middle" textLength="5.6" lengthAdjust="spacingAndGlyphs">10</text><text x="99.06" y="8.125" font-size="5.4" fill="#3a3a3a" text-anchor="middle" textLength="5.6" lengthAdjust="spacingAndGlyphs">11</text><text x="107.37" y="8.125" font-size="5.4" fill="#3a3a3a" text-anchor="middle" textLength="5.6" lengthAdjust="spacingAndGlyphs">12</text><text x="115.67" y="8.125" font-size="5.4" fill="#3a3a3a" text-anchor="middle" textLength="5.6" lengthAdjust="spacingAndGlyphs">13</text><text x="123.98" y="8.125" font-size="5.4" fill="#3a3a3a" text-anchor="middle" textLength="5.6" lengthAdjust="spacingAndGlyphs">14</text><text x="132.30" y="8.125" font-size="5.4" fill="#3a3a3a" text-anchor="middle" textLength="5.6" lengthAdjust="spacingAndGlyphs">15</text><text x="140.61" y="8.125" font-size="5.4" fill="#3a3a3a" text-anchor="middle" textLength="5.6" lengthAdjust="spacingAndGlyphs">16</text><text x="148.92" y="8.125" font-size="5.4" fill="#3a3a3a" text-anchor="middle" textLength="5.6" lengthAdjust="spacingAndGlyphs">17</text><text x="157.23" y="8.125" font-size="5.4" fill="#3a3a3a" text-anchor="middle" textLength="5.6" lengthAdjust="spacingAndGlyphs">18</text><text x="165.54" y="8.125" font-size="5.4" fill="#3a3a3a" text-anchor="middle" textLength="5.6" lengthAdjust="spacingAndGlyphs">19</text><text x="173.85" y="8.125" font-size="5.4" fill="#3a3a3a" text-anchor="middle" textLength="5.6" lengthAdjust="spacingAndGlyphs">20</text><text x="182.16" y="8.125" font-size="5.4" fill="#3a3a3a" text-anchor="middle" textLength="5.6" lengthAdjust="spacingAndGlyphs">21</text><text x="190.47" y="8.125" font-size="5.4" fill="#3a3a3a" text-anchor="middle" textLength="5.6" lengthAdjust="spacingAndGlyphs">22</text><text x="198.78" y="8.125" font-size="5.4" fill="#3a3a3a" text-anchor="middle" textLength="5.6" lengthAdjust="spacingAndGlyphs">23</text><text x="207.09" y="8.125" font-size="5.4" fill="#3a3a3a" text-anchor="middle" textLength="5.6" lengthAdjust="spacingAndGlyphs">24</text><text x="215.40" y="8.125" font-size="5.4" fill="#3a3a3a" text-anchor="middle" textLength="5.6" lengthAdjust="spacingAndGlyphs">25</text><text x="223.71" y="8.125" font-size="5.4" fill="#3a3a3a" text-anchor="middle" textLength="5.6" lengthAdjust="spacingAndGlyphs">26</text><text x="232.02" y="8.125" font-size="5.4" fill="#3a3a3a" text-anchor="middle" textLength="5.6" lengthAdjust="spacingAndGlyphs">27</text><text x="240.33" y="8.125" font-size="5.4" fill="#3a3a3a" text-anchor="middle" textLength="5.6" lengthAdjust="spacingAndGlyphs">28</text><text x="248.64" y="8.125" font-size="5.4" fill="#3a3a3a" text-anchor="middle" textLength="5.6" lengthAdjust="spacingAndGlyphs">29</text><text x="256.94" y="8.125" font-size="5.4" fill="#3a3a3a" text-anchor="middle" textLength="5.6" lengthAdjust="spacingAndGlyphs">30</text><text x="265.26" y="8.125" font-size="5.4" fill="#3a3a3a" text-anchor="middle" textLength="5.6" lengthAdjust="spacingAndGlyphs">31</text><text x="273.57" y="8.125" font-size="5.4" fill="#3a3a3a" text-anchor="middle" textLength="5.6" lengthAdjust="spacingAndGlyphs">32</text><text x="281.88" y="8.125" font-size="5.4" fill="#3a3a3a" text-anchor="middle" textLength="5.6" lengthAdjust="spacingAndGlyphs">33</text><text x="290.19" y="8.125" font-size="5.4" fill="#3a3a3a" text-anchor="middle" textLength="5.6" lengthAdjust="spacingAndGlyphs">34</text><text x="298.50" y="8.125" font-size="5.4" fill="#3a3a3a" text-anchor="middle" textLength="5.6" lengthAdjust="spacingAndGlyphs">35</text><text x="306.81" y="8.125" font-size="5.4" fill="#3a3a3a" text-anchor="middle" textLength="5.6" lengthAdjust="spacingAndGlyphs">36</text><text x="315.12" y="8.125" font-size="5.4" fill="#3a3a3a" text-anchor="middle" textLength="5.6" lengthAdjust="spacingAndGlyphs">37</text><text x="323.43" y="8.125" font-size="5.4" fill="#3a3a3a" text-anchor="middle" textLength="5.6" lengthAdjust="spacingAndGlyphs">38</text><text x="331.74" y="8.125" font-size="5.4" fill="#3a3a3a" text-anchor="middle" textLength="5.6" lengthAdjust="spacingAndGlyphs">39</text><text x="340.05" y="8.125" font-size="5.4" fill="#3a3a3a" text-anchor="middle" textLength="5.6" lengthAdjust="spacingAndGlyphs">40</text><text x="348.36" y="8.125" font-size="5.4" fill="#3a3a3a" text-anchor="middle" textLength="5.6" lengthAdjust="spacingAndGlyphs">41</text><text x="356.67" y="8.125" font-size="5.4" fill="#3a3a3a" text-anchor="middle" textLength="5.6" lengthAdjust="spacingAndGlyphs">42</text><text x="364.98" y="8.125" font-size="5.4" fill="#3a3a3a" text-anchor="middle" textLength="5.6" lengthAdjust="spacingAndGlyphs">43</text><text x="373.29" y="8.125" font-size="5.4" fill="#3a3a3a" text-anchor="middle" textLength="5.6" lengthAdjust="spacingAndGlyphs">44</text><text x="381.60" y="8.125" font-size="5.4" fill="#3a3a3a" text-anchor="middle" textLength="5.6" lengthAdjust="spacingAndGlyphs">45</text><text x="389.91" y="8.125" font-size="5.4" fill="#3a3a3a" text-anchor="middle" textLength="5.6" lengthAdjust="spacingAndGlyphs">46</text><text x="5.7" y="20.09" font-size="5.4" fill="#3a3a3a" text-anchor="middle">9</text><text x="5.7" y="31.77" font-size="5.4" fill="#3a3a3a" text-anchor="middle">8</text><text x="5.7" y="43.45" font-size="5.4" fill="#3a3a3a" text-anchor="middle">7</text><text x="5.7" y="55.13" font-size="5.4" fill="#3a3a3a" text-anchor="middle">6</text><text x="5.7" y="66.81" font-size="5.4" fill="#3a3a3a" text-anchor="middle">5</text><text x="5.7" y="78.49" font-size="5.4" fill="#3a3a3a" text-anchor="middle">4</text><text x="5.7" y="90.17" font-size="5.4" fill="#3a3a3a" text-anchor="middle">3</text><text x="5.7" y="101.85" font-size="5.4" fill="#3a3a3a" text-anchor="middle">2</text><text x="5.7" y="113.53" font-size="5.4" fill="#3a3a3a" text-anchor="middle">1</text><rect x="38.48" y="15.29" width="5" height="5.4" fill="#ffff80"/><text x="40.69" y="19.09" font-size="4.7" fill="#5e5e18" text-anchor="middle">P</text><rect x="61.86" y="12.25" width="7.81" height="11.18" fill="#fff"/><text x="65.81" y="19.49" font-size="4.6" font-weight="bold" fill="#666" text-anchor="middle">-</text><rect x="70.17" y="12.25" width="7.81" height="11.18" fill="#fff"/><text x="74.12" y="19.49" font-size="4.6" font-weight="bold" fill="#666" text-anchor="middle">-</text><rect x="78.48" y="12.25" width="7.81" height="11.18" fill="#fff"/><text x="82.44" y="19.49" font-size="4.6" font-weight="bold" fill="#666" text-anchor="middle">-</text><rect x="86.79" y="12.25" width="7.81" height="11.18" fill="#fff"/><text x="90.75" y="19.49" font-size="4.6" font-weight="bold" fill="#666" text-anchor="middle">-</text><rect x="103.41" y="12.25" width="7.81" height="11.18" fill="#fff"/><text x="107.37" y="19.49" font-size="4.6" font-weight="bold" fill="#666" text-anchor="middle">-</text><rect x="111.72" y="12.25" width="7.81" height="11.18" fill="#fff"/><text x="115.67" y="19.49" font-size="4.6" font-weight="bold" fill="#666" text-anchor="middle">-</text><rect x="120.03" y="12.25" width="7.81" height="11.18" fill="#fff"/><text x="123.98" y="19.49" font-size="4.6" font-weight="bold" fill="#666" text-anchor="middle">-</text><rect x="144.96" y="12.25" width="7.81" height="11.18" fill="#fff"/><text x="148.92" y="19.49" font-size="4.6" font-weight="bold" fill="#666" text-anchor="middle">-</text><rect x="153.27" y="12.25" width="7.81" height="11.18" fill="#fff"/><text x="157.23" y="19.49" font-size="4.6" font-weight="bold" fill="#666" text-anchor="middle">-</text><rect x="161.58" y="12.25" width="7.81" height="11.18" fill="#fff"/><text x="165.54" y="19.49" font-size="4.6" font-weight="bold" fill="#666" text-anchor="middle">-</text><rect x="169.89" y="12.25" width="7.81" height="11.18" fill="#fff"/><text x="173.85" y="19.49" font-size="4.6" font-weight="bold" fill="#666" text-anchor="middle">-</text><rect x="178.20" y="12.25" width="7.81" height="11.18" fill="#fff"/><text x="182.16" y="19.49" font-size="4.6" font-weight="bold" fill="#666" text-anchor="middle">-</text><rect x="186.51" y="12.25" width="7.81" height="11.18" fill="#fff"/><text x="190.47" y="19.49" font-size="4.6" font-weight="bold" fill="#666" text-anchor="middle">-</text><rect x="194.82" y="12.25" width="7.81" height="11.18" fill="#fff"/><text x="198.78" y="19.49" font-size="4.6" font-weight="bold" fill="#666" text-anchor="middle">-</text><rect x="203.13" y="12.25" width="7.81" height="11.18" fill="#fff"/><text x="207.09" y="19.49" font-size="4.6" font-weight="bold" fill="#666" text-anchor="middle">-</text><rect x="211.44" y="12.25" width="7.81" height="11.18" fill="#fff"/><text x="215.40" y="19.49" font-size="4.6" font-weight="bold" fill="#666" text-anchor="middle">-</text><rect x="219.75" y="12.25" width="7.81" height="11.18" fill="#fff"/><text x="223.71" y="19.49" font-size="4.6" font-weight="bold" fill="#666" text-anchor="middle">-</text><rect x="228.06" y="12.25" width="7.81" height="11.18" fill="#fff"/><text x="232.02" y="19.49" font-size="4.6" font-weight="bold" fill="#666" text-anchor="middle">-</text><rect x="236.37" y="12.25" width="7.81" height="11.18" fill="#fff"/><text x="240.33" y="19.49" font-size="4.6" font-weight="bold" fill="#666" text-anchor="middle">-</text><rect x="244.68" y="12.25" width="7.81" height="11.18" fill="#fff"/><text x="248.64" y="19.49" font-size="4.6" font-weight="bold" fill="#666" text-anchor="middle">-</text><rect x="252.99" y="12.25" width="7.81" height="11.18" fill="#fff"/><text x="256.94" y="19.49" font-size="4.6" font-weight="bold" fill="#666" text-anchor="middle">-</text><rect x="261.30" y="12.25" width="7.81" height="11.18" fill="#fff"/><text x="265.25" y="19.49" font-size="4.6" font-weight="bold" fill="#666" text-anchor="middle">-</text><rect x="269.61" y="12.25" width="7.81" height="11.18" fill="#fff"/><text x="273.56" y="19.49" font-size="4.6" font-weight="bold" fill="#666" text-anchor="middle">-</text><rect x="277.92" y="12.25" width="7.81" height="11.18" fill="#fff"/><text x="281.88" y="19.49" font-size="4.6" font-weight="bold" fill="#666" text-anchor="middle">-</text><rect x="286.23" y="12.25" width="7.81" height="11.18" fill="#fff"/><text x="290.19" y="19.49" font-size="4.6" font-weight="bold" fill="#666" text-anchor="middle">-</text><rect x="294.54" y="12.25" width="7.81" height="11.18" fill="#fff"/><text x="298.50" y="19.49" font-size="4.6" font-weight="bold" fill="#666" text-anchor="middle">-</text><rect x="302.85" y="12.25" width="7.81" height="11.18" fill="#fff"/><text x="306.81" y="19.49" font-size="4.6" font-weight="bold" fill="#666" text-anchor="middle">-</text><rect x="311.16" y="12.25" width="7.81" height="11.18" fill="#fff"/><text x="315.12" y="19.49" font-size="4.6" font-weight="bold" fill="#666" text-anchor="middle">-</text><rect x="319.47" y="12.25" width="7.81" height="11.18" fill="#fff"/><text x="323.43" y="19.49" font-size="4.6" font-weight="bold" fill="#666" text-anchor="middle">-</text><rect x="327.78" y="12.25" width="7.81" height="11.18" fill="#fff"/><text x="331.74" y="19.49" font-size="4.6" font-weight="bold" fill="#666" text-anchor="middle">-</text><rect x="336.09" y="12.25" width="7.81" height="11.18" fill="#fff"/><text x="340.05" y="19.49" font-size="4.6" font-weight="bold" fill="#666" text-anchor="middle">-</text><rect x="344.40" y="12.25" width="7.81" height="11.18" fill="#fff"/><text x="348.36" y="19.49" font-size="4.6" font-weight="bold" fill="#666" text-anchor="middle">-</text><rect x="352.71" y="12.25" width="7.81" height="11.18" fill="#fff"/><text x="356.67" y="19.49" font-size="4.6" font-weight="bold" fill="#666" text-anchor="middle">-</text><rect x="361.02" y="12.25" width="7.81" height="11.18" fill="#fff"/><text x="364.98" y="19.49" font-size="4.6" font-weight="bold" fill="#666" text-anchor="middle">-</text><rect x="369.33" y="12.25" width="7.81" height="11.18" fill="#fff"/><text x="373.29" y="19.49" font-size="4.6" font-weight="bold" fill="#666" text-anchor="middle">-</text><rect x="377.64" y="12.25" width="7.81" height="11.18" fill="#fff"/><text x="381.60" y="19.49" font-size="4.6" font-weight="bold" fill="#666" text-anchor="middle">-</text><rect x="385.95" y="12.25" width="7.81" height="11.18" fill="#fff"/><text x="389.91" y="19.49" font-size="4.6" font-weight="bold" fill="#666" text-anchor="middle">-</text><rect x="146.52" y="26.97" width="5" height="5.4" fill="#ffff80"/><text x="148.72" y="30.77" font-size="4.7" fill="#5e5e18" text-anchor="middle">P</text><rect x="204.69" y="26.97" width="5" height="5.4" fill="#ffff80"/><text x="206.89" y="30.77" font-size="4.7" fill="#5e5e18" text-anchor="middle">P</text><rect x="261.30" y="23.93" width="7.81" height="11.18" fill="#fff"/><text x="265.25" y="31.17" font-size="4.6" font-weight="bold" fill="#666" text-anchor="middle">-</text><rect x="271.16" y="26.97" width="5" height="5.4" fill="#ffff80"/><text x="273.37" y="30.77" font-size="4.7" fill="#5e5e18" text-anchor="middle">P</text><rect x="287.78" y="26.97" width="5" height="5.4" fill="#ffff80"/><text x="289.99" y="30.77" font-size="4.7" fill="#5e5e18" text-anchor="middle">P</text><rect x="304.40" y="26.97" width="5" height="5.4" fill="#ffff80"/><text x="306.61" y="30.77" font-size="4.7" fill="#5e5e18" text-anchor="middle">P</text><rect x="337.64" y="26.97" width="5" height="5.4" fill="#ffff80"/><text x="339.85" y="30.77" font-size="4.7" fill="#5e5e18" text-anchor="middle">P</text><rect x="144.66" y="35.31" width="8.41" height="11.78" fill="#ff1080"/><text x="148.92" y="43.25" font-size="4.8" fill="#a0084c" text-anchor="middle">I</text><rect x="319.17" y="35.31" width="8.41" height="11.78" fill="#800080"/><text x="323.43" y="43.25" font-size="4.8" fill="#3a003a" text-anchor="middle">N</text><rect x="96.66" y="62.01" width="5" height="5.4" fill="#ffff80"/><text x="98.86" y="65.81" font-size="4.7" fill="#5e5e18" text-anchor="middle">P</text><rect x="146.52" y="62.01" width="5" height="5.4" fill="#ffff80"/><text x="148.72" y="65.81" font-size="4.7" fill="#5e5e18" text-anchor="middle">P</text><rect x="287.78" y="62.01" width="5" height="5.4" fill="#ffff80"/><text x="289.99" y="65.81" font-size="4.7" fill="#5e5e18" text-anchor="middle">P</text><rect x="179.76" y="73.69" width="5" height="5.4" fill="#ffff80"/><text x="181.96" y="77.49" font-size="4.7" fill="#5e5e18" text-anchor="middle">P</text><rect x="296.09" y="73.69" width="5" height="5.4" fill="#ffff80"/><text x="298.30" y="77.49" font-size="4.7" fill="#5e5e18" text-anchor="middle">P</text><rect x="53.25" y="82.03" width="8.41" height="11.78" fill="#800080"/><text x="57.51" y="89.97" font-size="4.8" fill="#3a003a" text-anchor="middle">N</text><rect x="154.83" y="85.37" width="5" height="5.4" fill="#ffff80"/><text x="157.03" y="89.17" font-size="4.7" fill="#5e5e18" text-anchor="middle">P</text><rect x="188.07" y="85.37" width="5" height="5.4" fill="#ffff80"/><text x="190.27" y="89.17" font-size="4.7" fill="#5e5e18" text-anchor="middle">P</text><rect x="310.86" y="82.03" width="8.41" height="11.78" fill="#800080"/><text x="315.12" y="89.97" font-size="4.8" fill="#3a003a" text-anchor="middle">N</text><rect x="38.48" y="97.05" width="5" height="5.4" fill="#ffff80"/><text x="40.69" y="100.85" font-size="4.7" fill="#5e5e18" text-anchor="middle">P</text><rect x="63.41" y="97.05" width="5" height="5.4" fill="#ffff80"/><text x="65.61" y="100.85" font-size="4.7" fill="#5e5e18" text-anchor="middle">P</text><rect x="211.14" y="93.71" width="8.41" height="11.78" fill="#800080"/><text x="215.40" y="101.65" font-size="4.8" fill="#3a003a" text-anchor="middle">N</text><rect x="221.31" y="97.05" width="5" height="5.4" fill="#ffff80"/><text x="223.50" y="100.85" font-size="4.7" fill="#5e5e18" text-anchor="middle">P</text><rect x="11.70" y="105.39" width="8.41" height="11.78" fill="#ff1080"/><text x="15.96" y="113.33" font-size="4.8" fill="#a0084c" text-anchor="middle">O</text><rect x="30.17" y="108.73" width="5" height="5.4" fill="#ffff80"/><text x="32.38" y="112.53" font-size="4.7" fill="#5e5e18" text-anchor="middle">P</text><rect x="113.28" y="108.73" width="5" height="5.4" fill="#ffff80"/><text x="115.47" y="112.53" font-size="4.7" fill="#5e5e18" text-anchor="middle">P</text><rect x="161.28" y="105.39" width="8.41" height="11.78" fill="#800080"/><text x="165.54" y="113.33" font-size="4.8" fill="#3a003a" text-anchor="middle">N</text><rect x="202.83" y="105.39" width="8.41" height="11.78" fill="#ff1080"/><text x="207.09" y="113.33" font-size="4.8" fill="#a0084c" text-anchor="middle">I</text><rect x="361.02" y="105.69" width="7.81" height="11.18" fill="#fff"/><text x="364.98" y="112.93" font-size="4.6" font-weight="bold" fill="#666" text-anchor="middle">-</text></svg>
<div style="left:664px;top:195px;width:396.2px;height:28.6px;background:#ece9d8;border:1px solid #8a887c;border-right-color:#fff;border-bottom-color:#fff;box-sizing:border-box;"></div>
<div style="left:665.2px;top:205.8px;width:394.3px;height:16.8px;background:#ffff80;"></div>
<div style="left:665.2px;top:205.8px;width:4.4px;height:16.8px;background:#ece9d8;"></div>
<div style="left:665.2px;top:196.2px;width:4.4px;height:9.1px;border-left:.8px solid #fbfaf4;border-right:.8px solid #bcb8a8;border-bottom:.8px solid #bcb8a8;box-sizing:border-box;"></div>
<div style="left:670.1px;top:196.2px;width:40.9px;height:9.1px;border-left:.8px solid #fbfaf4;border-right:.8px solid #bcb8a8;border-bottom:.8px solid #bcb8a8;box-sizing:border-box;"></div>
<div class="t" style="left:679.15px;top:197.7px;font-size:4.6px;color:#222;letter-spacing:0.141px;">변속기코드</div>
<div style="left:710.5px;top:205.8px;width:0.6px;height:16.8px;background:#e2e2a6;"></div>
<div style="left:711.5px;top:196.2px;width:62.5px;height:9.1px;border-left:.8px solid #fbfaf4;border-right:.8px solid #bcb8a8;border-bottom:.8px solid #bcb8a8;box-sizing:border-box;"></div>
<div class="t" style="left:734.9px;top:197.7px;font-size:4.6px;color:#222;letter-spacing:-0.063px;">차 종 명</div>
<div style="left:773.5px;top:205.8px;width:0.6px;height:16.8px;background:#e2e2a6;"></div>
<div style="left:774.5px;top:196.2px;width:62.8px;height:9.1px;border-left:.8px solid #fbfaf4;border-right:.8px solid #bcb8a8;border-bottom:.8px solid #bcb8a8;box-sizing:border-box;"></div>
<div class="t" style="left:796.75px;top:197.7px;font-size:4.6px;color:#222;letter-spacing:0.130px;">일련번호</div>
<div style="left:836.8px;top:205.8px;width:0.6px;height:16.8px;background:#e2e2a6;"></div>
<div style="left:837.8px;top:196.2px;width:39.4px;height:9.1px;border-left:.8px solid #fbfaf4;border-right:.8px solid #bcb8a8;border-bottom:.8px solid #bcb8a8;box-sizing:border-box;"></div>
<div class="t" style="left:850.55px;top:197.7px;font-size:4.6px;color:#222;letter-spacing:0.144px;">셀위치</div>
<div style="left:876.7px;top:205.8px;width:0.6px;height:16.8px;background:#e2e2a6;"></div>
<div style="left:877.7px;top:196.2px;width:39.6px;height:9.1px;border-left:.8px solid #fbfaf4;border-right:.8px solid #bcb8a8;border-bottom:.8px solid #bcb8a8;box-sizing:border-box;"></div>
<div class="t" style="left:890.55px;top:197.7px;font-size:4.6px;color:#222;letter-spacing:0.144px;">셀상태</div>
<div style="left:916.8px;top:205.8px;width:0.6px;height:16.8px;background:#e2e2a6;"></div>
<div style="left:917.8px;top:196.2px;width:39.4px;height:9.1px;border-left:.8px solid #fbfaf4;border-right:.8px solid #bcb8a8;border-bottom:.8px solid #bcb8a8;box-sizing:border-box;"></div>
<div class="t" style="left:928.35px;top:197.7px;font-size:4.6px;color:#222;letter-spacing:0.130px;">작업위치</div>
<div style="left:956.7px;top:205.8px;width:0.6px;height:16.8px;background:#e2e2a6;"></div>
<div style="left:957.7px;top:196.2px;width:32.9px;height:9.1px;border-left:.8px solid #fbfaf4;border-right:.8px solid #bcb8a8;border-bottom:.8px solid #bcb8a8;box-sizing:border-box;"></div>
<div class="t" style="left:965px;top:197.7px;font-size:4.6px;color:#222;letter-spacing:0.130px;">작업형태</div>
<div style="left:990.1px;top:205.8px;width:0.6px;height:16.8px;background:#e2e2a6;"></div>
<div style="left:991.1px;top:196.2px;width:35.9px;height:9.1px;border-left:.8px solid #fbfaf4;border-right:.8px solid #bcb8a8;border-bottom:.8px solid #bcb8a8;box-sizing:border-box;"></div>
<div class="t" style="left:999.9px;top:197.7px;font-size:4.6px;color:#222;letter-spacing:0.130px;">작업일자</div>
<div style="left:1026.5px;top:205.8px;width:0.6px;height:16.8px;background:#e2e2a6;"></div>
<div style="left:1027.5px;top:196.2px;width:32px;height:9.1px;border-left:.8px solid #fbfaf4;border-right:.8px solid #bcb8a8;border-bottom:.8px solid #bcb8a8;box-sizing:border-box;"></div>
<div class="t" style="left:1034.35px;top:197.7px;font-size:4.6px;color:#222;letter-spacing:0.130px;">작업시간</div>
<div style="left:1059px;top:205.8px;width:0.6px;height:16.8px;background:#e2e2a6;"></div>
<div style="left:665.2px;top:214px;width:394.3px;height:0.6px;background:#e2e2a6;"></div>
<div style="left:665.2px;top:222.3px;width:394.3px;height:0.6px;background:#e2e2a6;"></div>
<div style="left:664.7px;top:229px;width:196.5px;height:30.6px;border:1px solid #d4d0c0;border-radius:2px;box-sizing:border-box;box-shadow:0.6px 0.6px 0 #fff;"></div>
<div style="left:675px;top:237.2px;width:37.6px;height:14.8px;background:#ece9d8;box-sizing:border-box;border-top:1px solid #fbfaf6;border-left:1px solid #fbfaf6;border-right:.8px solid #b8b4a4;border-bottom:.8px solid #b8b4a4;box-shadow:0.6px 0.6px 0 #8e8c80;"></div>
<svg class="a" style="left:679.5px;top:239.4px" width="10.5" height="10.5" viewBox="0 0 18 18"><path d="M3 3 Q9 0 15 3 L15 10 Q12 16 9 17 Q5 15 3 10 Z" fill="#a8a494"/></svg>
<div class="t" style="left:694.5px;top:241.6px;font-size:5px;color:#aaa69a;text-shadow:.5px .5px 0 #fff;letter-spacing:-0.099px;">반 출</div>
<div style="left:720.8px;top:237.2px;width:37.6px;height:14.8px;background:#ece9d8;box-sizing:border-box;border-top:1px solid #fbfaf6;border-left:1px solid #fbfaf6;border-right:.8px solid #b8b4a4;border-bottom:.8px solid #b8b4a4;box-shadow:0.6px 0.6px 0 #8e8c80;"></div>
<svg class="a" style="left:725.3px;top:239.4px" width="10.5" height="10.5" viewBox="0 0 18 18"><path d="M1 5 L6 5 L8 2 L15 2 L15 17 L1 17 Z" fill="#a8a494"/></svg>
<div class="t" style="left:737.8px;top:241.6px;font-size:5px;color:#aaa69a;text-shadow:.5px .5px 0 #fff;letter-spacing:-0.303px;">입고완료</div>
<div style="left:767px;top:237.2px;width:37.6px;height:14.8px;background:#ece9d8;box-sizing:border-box;border-top:1px solid #fbfaf6;border-left:1px solid #fbfaf6;border-right:.8px solid #b8b4a4;border-bottom:.8px solid #b8b4a4;box-shadow:0.6px 0.6px 0 #8e8c80;"></div>
<svg class="a" style="left:771.5px;top:239.4px" width="10.5" height="10.5" viewBox="0 0 18 18"><rect x="1" y="2" width="15" height="14" fill="#e4e0d0" stroke="#a8a494" stroke-width="1.2"/><path d="M1 2 L16 16 M5 2 L16 12 M1 7 L10 16" stroke="#a8a494" stroke-width="1"/></svg>
<div class="t" style="left:784px;top:241.6px;font-size:5px;color:#aaa69a;text-shadow:.5px .5px 0 #fff;letter-spacing:-0.303px;">사용금지</div>
<div style="left:813px;top:237.2px;width:37.6px;height:14.8px;background:#ece9d8;box-sizing:border-box;border-top:1px solid #fbfaf6;border-left:1px solid #fbfaf6;border-right:.8px solid #b8b4a4;border-bottom:.8px solid #b8b4a4;box-shadow:0.6px 0.6px 0 #8e8c80;"></div>
<svg class="a" style="left:817.5px;top:239.4px" width="10.5" height="10.5" viewBox="0 0 18 18"><rect x="2" y="2" width="14" height="15" fill="#a8a494"/></svg>
<div class="t" style="left:830px;top:241.6px;font-size:5px;color:#aaa69a;text-shadow:.5px .5px 0 #fff;letter-spacing:-0.303px;">금지해제</div>
<div style="left:865px;top:229.7px;width:194.5px;height:29.9px;border:1px solid #d4d0c0;border-radius:2px;box-sizing:border-box;box-shadow:0.6px 0.6px 0 #fff;"></div>
<div style="left:955.5px;top:227px;width:15.5px;height:6px;background:#ece9d8;"></div>
<div class="t" style="left:958.1px;top:226.6px;font-size:5px;color:#333;letter-spacing:-0.132px;">범 례</div>
<div class="t" style="left:879px;top:236.4px;font-size:5.2px;font-weight:bold;color:#222;letter-spacing:0.514px;">빈&nbsp; &nbsp; 셀 : -</div>
<div class="t" style="left:925.8px;top:236.4px;font-size:5.2px;font-weight:bold;color:#0a2a6a;letter-spacing:0.031px;">입고완료 : <span style="font-size:6px;line-height:0">■</span></div>
<div class="t" style="left:973px;top:236.4px;font-size:5.2px;font-weight:bold;color:#222;letter-spacing:-0.072px;">공파레트 : P</div>
<div class="t" style="left:1019px;top:236.4px;font-size:5.2px;font-weight:bold;color:#80108a;letter-spacing:-0.109px;">사용금지 : N</div>
<div class="t" style="left:879px;top:247.1px;font-size:5.2px;font-weight:bold;color:#e818d8;letter-spacing:0.269px;">입 고 중 : I</div>
<div class="t" style="left:925.8px;top:247.1px;font-size:5.2px;font-weight:bold;color:#e818d8;letter-spacing:0.203px;">출 고 중 : O</div>
<div class="t" style="left:973px;top:247.1px;font-size:5.2px;font-weight:bold;color:#e81828;letter-spacing:-0.109px;">이중입고 : D</div>
<div class="t" style="left:1019px;top:247.1px;font-size:5.2px;font-weight:bold;color:#e81828;letter-spacing:0.156px;">공 출 고 : E</div>
<div style="left:660px;top:288px;width:404.9px;height:318.8px;background:#0a2cd2;border-radius:4px 4px 0 0;"></div>
<div style="left:660px;top:288px;width:404.9px;height:18px;border-radius:4px 4px 0 0;background:linear-gradient(180deg,#2a78ec 0%,#0a5ce8 10%,#0054e4 45%,#0460f0 80%,#0a4cd0 100%);"></div>
<div style="left:662.6px;top:305.8px;width:399.7px;height:298.5px;background:#fdfde6;"></div>
<div style="left:664px;top:306.6px;width:396.9px;height:296.2px;background:#ece9d8;"></div>
<div style="left:663.6px;top:294px;width:9px;height:7px;background:#fff;border-top:1.2px solid #cfe0ff;box-sizing:border-box;"></div>
<div class="t" style="left:676px;top:292.8px;font-size:9.4px;font-weight:bold;color:#fff;text-shadow:.6px .6px 0 #0a2a8a;letter-spacing:-0.155px;">운전형태 설정</div>
<div style="left:1019.4px;top:291.8px;width:13.2px;height:12.6px;border:0.8px solid #f0f4fc;border-radius:2px;box-sizing:border-box;background:linear-gradient(135deg,#5a94f4,#2458d8 60%,#3a72e8);"></div>
<div style="left:1034px;top:291.8px;width:12.6px;height:12.6px;border:0.8px solid #f0f4fc;border-radius:2px;box-sizing:border-box;background:linear-gradient(135deg,#5a94f4,#2458d8 60%,#3a72e8);opacity:.75;"></div>
<div style="left:1048px;top:291.8px;width:13.4px;height:12.6px;border:0.8px solid #f0f4fc;border-radius:2px;box-sizing:border-box;background:linear-gradient(135deg,#f09070,#d84420 55%,#c03818);"></div>
<div style="left:1022.6px;top:299.6px;width:4.6px;height:1.8px;background:#fff;"></div>
<div style="left:1037.2px;top:295px;width:6.4px;height:6.2px;border:0.8px solid #9cc0f8;border-top-width:1.6px;box-sizing:border-box;"></div>
<svg class="a" style="left:1051.2px;top:294.6px" width="7" height="7" viewBox="0 0 7 7"><path d="M0.8 0.8L6.2 6.2M6.2 0.8L0.8 6.2" stroke="#fff" stroke-width="1.5"/></svg>
<div style="left:672.2px;top:314.3px;width:90.1px;height:68.6px;border:1px solid #cac6b6;border-radius:2px;box-sizing:border-box;box-shadow:0.6px 0.6px 0 #fbfaf6, 0.6px 0.6px 0 #fbfaf6 inset;"></div><div style="left:685.3px;top:311.7px;width:63.8px;height:7px;background:#ece9d8;"></div><div class="t" style="left:687.8px;top:311px;font-size:8px;color:#000;-webkit-text-stroke:.1px #000;letter-spacing:0.491px;">크래인 운전형태</div>
<div class="rd" style="left:682.75px;top:325.75px;background:#fff;"><div style="left:1.15px;top:1.15px;width:2.2px;height:2.2px;border-radius:50%;background:#000"></div></div>
<div class="t" style="left:693.2px;top:324.7px;font-size:8px;color:#000;-webkit-text-stroke:.1px #000;letter-spacing:0.679px;">입/출고 운전</div>
<div class="rd" style="left:682.75px;top:339.75px;background:#fff;"></div>
<div class="t" style="left:693.2px;top:338.7px;font-size:8px;color:#000;-webkit-text-stroke:.1px #000;letter-spacing:0.529px;">입고만 운전</div>
<div class="rd" style="left:682.75px;top:354.05px;background:#fff;"></div>
<div class="t" style="left:693.2px;top:353px;font-size:8px;color:#000;-webkit-text-stroke:.1px #000;letter-spacing:0.529px;">출고만 운전</div>
<div class="rd" style="left:682.75px;top:368.35px;background:#fff;"></div>
<div class="t" style="left:693.2px;top:367.3px;font-size:8px;color:#000;-webkit-text-stroke:.1px #000;letter-spacing:0.541px;">크래인 운전정지</div>
<div style="left:692.4px;top:324.2px;width:48.8px;height:10.2px;border:0.6px solid #8a887c;box-sizing:border-box;"></div>
<div style="left:769.2px;top:314.3px;width:90.5px;height:68.6px;border:1px solid #cac6b6;border-radius:2px;box-sizing:border-box;box-shadow:0.6px 0.6px 0 #fbfaf6, 0.6px 0.6px 0 #fbfaf6 inset;"></div><div style="left:782.3px;top:311.7px;width:63.2px;height:7px;background:#ece9d8;"></div><div class="t" style="left:784.8px;top:311px;font-size:8px;color:#000;-webkit-text-stroke:.1px #000;letter-spacing:0.416px;">시스템 운전형태</div>
<div class="rd" style="left:780.05px;top:325.75px;background:#fff;"><div style="left:1.15px;top:1.15px;width:2.2px;height:2.2px;border-radius:50%;background:#000"></div></div>
<div class="t" style="left:790.5px;top:324.7px;font-size:8px;color:#000;-webkit-text-stroke:.1px #000;letter-spacing:0.550px;">자동 입/출고</div>
<div class="rd" style="left:780.05px;top:339.75px;background:#fff;"></div>
<div class="t" style="left:790.5px;top:338.7px;font-size:8px;color:#000;-webkit-text-stroke:.1px #000;letter-spacing:0.550px;">수동 입/출고</div>
<div class="rd" style="left:780.05px;top:354.05px;background:#fff;"></div>
<div class="t" style="left:790.5px;top:353px;font-size:8px;color:#000;-webkit-text-stroke:.1px #000;letter-spacing:0.550px;">재고 입/출고</div>
<div class="rd" style="left:780.05px;top:368.35px;background:#fff;"></div>
<div class="t" style="left:790.5px;top:367.3px;font-size:8px;color:#000;-webkit-text-stroke:.1px #000;letter-spacing:0.491px;">시스템 운전정지</div>
<svg class="a" style="left:905px;top:329px" width="19" height="40.4" viewBox="0 0 19 40.4"><rect width="19" height="40.4" fill="#d6d4ce"/><rect x="10" y="0" width="9" height="40.4" fill="#e2e0da"/><rect x="15" y="3" width="3" height="26" fill="#ecebe6"/><rect x="9.8" y="3" width="3.6" height="31" fill="#f2f2ee"/><path d="M8.9 2.2 L8.9 34.2" stroke="#74bc84" stroke-width="1.7"/><path d="M14 3.4 L14 33.2" stroke="#7cc08a" stroke-width="1.3"/><path d="M6.3 1.5 L15.1 3" stroke="#e03a34" stroke-width="1.5"/><circle cx="6.6" cy="1.6" r="1.1" fill="#e82020"/><path d="M8.6 24 L14.6 23.6" stroke="#d84840" stroke-width="1.2"/><rect x="14.7" y="24.8" width="2.9" height="7.6" fill="#8a8aa0"/><rect x="5" y="31" width="2.1" height="4" fill="#7a7a94"/><path d="M4.2 35.8 L14.5 33" stroke="#d8443c" stroke-width="1.4"/><path d="M0.2 38.4 L8.2 35.6" stroke="#74b482" stroke-width="1.5"/><path d="M8 36 L16.6 33.2" stroke="#9a9aa8" stroke-width=".8"/></svg>
<div style="left:971.7px;top:317.8px;width:67.6px;height:24.8px;background:#ece9d8;box-sizing:border-box;border-top:1px solid #fbfaf6;border-left:1px solid #fbfaf6;border-right:1px solid #a8a494;border-bottom:1px solid #a8a494;box-shadow:.9px .9px 0 #8a887c;"></div>
<svg class="a" style="left:982.6px;top:322.8px" width="16" height="15.5" viewBox="0 0 32 31"><rect x="1.5" y="1.5" width="21" height="23" fill="#9c9c9c" stroke="#5a5a5a" stroke-width="1.6"/><rect x="5" y="4" width="8" height="6" fill="#e8e8e8"/><rect x="15" y="3" width="4.5" height="15" fill="#f4f4f4" stroke="#333" stroke-width="1"/><rect x="6" y="12" width="6" height="2" fill="#333"/><path d="M4 20 L7.5 18 L8 14 L11.5 17 L14 12.5 L16.5 17 L20 13 L21.5 17.5 L25.5 15.5 L25 20 L30 21 L26 24 L28 28 L23.5 27 L21.5 30.5 L18.5 27.5 L15.5 30.5 L13 27 L9 29.5 L9 25.5 L4.5 25.5 L7 22.5 Z" fill="#f4ec20" stroke="#3a3a00" stroke-width="1.1" stroke-linejoin="round"/><path d="M10 22 L24 22 M12 25 L22 25" stroke="#6a6a00" stroke-width="1"/></svg>
<div class="t" style="left:1005px;top:323.8px;font-size:9px;font-weight:bold;color:#0a78dc;letter-spacing:0.326px;">설 정</div>
<div style="left:971.7px;top:353.5px;width:67.6px;height:25.8px;background:#ece9d8;box-sizing:border-box;border-top:1px solid #fbfaf6;border-left:1px solid #fbfaf6;border-right:1px solid #a8a494;border-bottom:1px solid #a8a494;box-shadow:.9px .9px 0 #8a887c;"></div>
<svg class="a" style="left:980.6px;top:357px" width="19" height="19" viewBox="0 0 38 38"><circle cx="20.4" cy="20.4" r="13.6" fill="none" stroke="#1a0a0a" stroke-width="4.4" opacity=".85"/><path d="M11.4 10.4 L29.4 29.4" stroke="#1a0a0a" stroke-width="3.6" opacity=".7"/><circle cx="18.4" cy="18" r="13.6" fill="none" stroke="#cc1414" stroke-width="3.8"/><path d="M9 8.6 L27.8 27.4" stroke="#cc1414" stroke-width="3.6"/></svg>
<div class="t" style="left:1006px;top:360.4px;font-size:9px;font-weight:bold;color:#f27a48;letter-spacing:0.393px;">취 소</div>
<div style="left:674px;top:393px;width:7.2px;height:7.2px;background:#fff;box-sizing:border-box;border-top:1px solid #7a786c;border-left:1px solid #7a786c;border-right:.8px solid #fbfaf6;border-bottom:.8px solid #fbfaf6;"></div>
<div class="t" style="left:685px;top:392.2px;font-size:8px;color:#000;-webkit-text-stroke:.1px #000;letter-spacing:0.454px;">스태커 크래인 호기별 운전설정</div>
<div style="left:672.2px;top:413.5px;width:90.1px;height:68px;border:1px solid #cac6b6;border-radius:2px;box-sizing:border-box;box-shadow:0.6px 0.6px 0 #fbfaf6, 0.6px 0.6px 0 #fbfaf6 inset;"></div><div style="left:691.5px;top:410.9px;width:52.3px;height:7px;background:#ece9d8;"></div><div class="t" style="left:694px;top:410.2px;font-size:8px;color:#000;font-weight:bold;letter-spacing:0.431px;">크래인 1호기</div>
<div class="rd" style="left:682.75px;top:424.55px;background:#ece9d8;"><div style="left:1.15px;top:1.15px;width:2.2px;height:2.2px;border-radius:50%;background:#8a887c"></div></div>
<div class="t" style="left:693.4px;top:423.5px;font-size:8px;color:#b4b0a0;text-shadow:.6px .6px 0 #fff;letter-spacing:0.679px;">입/출고 운전</div>
<div class="rd" style="left:682.75px;top:438.75px;background:#ece9d8;"></div>
<div class="t" style="left:693.4px;top:437.7px;font-size:8px;color:#b4b0a0;text-shadow:.6px .6px 0 #fff;letter-spacing:0.529px;">입고만 운전</div>
<div class="rd" style="left:682.75px;top:452.95px;background:#ece9d8;"></div>
<div class="t" style="left:693.4px;top:451.9px;font-size:8px;color:#b4b0a0;text-shadow:.6px .6px 0 #fff;letter-spacing:0.529px;">출고만 운전</div>
<div class="rd" style="left:682.75px;top:466.95px;background:#ece9d8;"></div>
<div class="t" style="left:693.4px;top:465.9px;font-size:8px;color:#b4b0a0;text-shadow:.6px .6px 0 #fff;letter-spacing:0.541px;">크래인 운전정지</div>
<div style="left:769.2px;top:413.5px;width:90.5px;height:68px;border:1px solid #cac6b6;border-radius:2px;box-sizing:border-box;box-shadow:0.6px 0.6px 0 #fbfaf6, 0.6px 0.6px 0 #fbfaf6 inset;"></div><div style="left:788.5px;top:410.9px;width:52.3px;height:7px;background:#ece9d8;"></div><div class="t" style="left:791px;top:410.2px;font-size:8px;color:#000;font-weight:bold;letter-spacing:0.431px;">크래인 2호기</div>
<div class="rd" style="left:780.05px;top:424.55px;background:#ece9d8;"><div style="left:1.15px;top:1.15px;width:2.2px;height:2.2px;border-radius:50%;background:#8a887c"></div></div>
<div class="t" style="left:790.7px;top:423.5px;font-size:8px;color:#b4b0a0;text-shadow:.6px .6px 0 #fff;letter-spacing:0.679px;">입/출고 운전</div>
<div class="rd" style="left:780.05px;top:438.75px;background:#ece9d8;"></div>
<div class="t" style="left:790.7px;top:437.7px;font-size:8px;color:#b4b0a0;text-shadow:.6px .6px 0 #fff;letter-spacing:0.529px;">입고만 운전</div>
<div class="rd" style="left:780.05px;top:452.95px;background:#ece9d8;"></div>
<div class="t" style="left:790.7px;top:451.9px;font-size:8px;color:#b4b0a0;text-shadow:.6px .6px 0 #fff;letter-spacing:0.529px;">출고만 운전</div>
<div class="rd" style="left:780.05px;top:466.95px;background:#ece9d8;"></div>
<div class="t" style="left:790.7px;top:465.9px;font-size:8px;color:#b4b0a0;text-shadow:.6px .6px 0 #fff;letter-spacing:0.541px;">크래인 운전정지</div>
<div style="left:867.3px;top:413.5px;width:90.4px;height:68px;border:1px solid #cac6b6;border-radius:2px;box-sizing:border-box;box-shadow:0.6px 0.6px 0 #fbfaf6, 0.6px 0.6px 0 #fbfaf6 inset;"></div><div style="left:886.6px;top:410.9px;width:52.3px;height:7px;background:#ece9d8;"></div><div class="t" style="left:889.1px;top:410.2px;font-size:8px;color:#000;font-weight:bold;letter-spacing:0.431px;">크래인 3호기</div>
<div class="rd" style="left:877.75px;top:424.95px;background:#ece9d8;"><div style="left:1.15px;top:1.15px;width:2.2px;height:2.2px;border-radius:50%;background:#8a887c"></div></div>
<div class="t" style="left:888.4px;top:423.9px;font-size:8px;color:#b4b0a0;text-shadow:.6px .6px 0 #fff;letter-spacing:0.679px;">입/출고 운전</div>
<div class="rd" style="left:877.75px;top:440.55px;background:#ece9d8;"></div>
<div class="t" style="left:888.4px;top:439.5px;font-size:8px;color:#b4b0a0;text-shadow:.6px .6px 0 #fff;letter-spacing:0.529px;">입고만 운전</div>
<div class="rd" style="left:877.75px;top:453.95px;background:#ece9d8;"></div>
<div class="t" style="left:888.4px;top:452.9px;font-size:8px;color:#b4b0a0;text-shadow:.6px .6px 0 #fff;letter-spacing:0.529px;">출고만 운전</div>
<div class="rd" style="left:877.75px;top:467.35px;background:#ece9d8;"></div>
<div class="t" style="left:888.4px;top:466.3px;font-size:8px;color:#b4b0a0;text-shadow:.6px .6px 0 #fff;letter-spacing:0.541px;">크래인 운전정지</div>
<div style="left:964px;top:413.5px;width:90.3px;height:68px;border:1px solid #cac6b6;border-radius:2px;box-sizing:border-box;box-shadow:0.6px 0.6px 0 #fbfaf6, 0.6px 0.6px 0 #fbfaf6 inset;"></div><div style="left:983.3px;top:410.9px;width:52.3px;height:7px;background:#ece9d8;"></div><div class="t" style="left:985.8px;top:410.2px;font-size:8px;color:#000;font-weight:bold;letter-spacing:0.431px;">크래인 4호기</div>
<div class="rd" style="left:974.75px;top:424.95px;background:#ece9d8;"><div style="left:1.15px;top:1.15px;width:2.2px;height:2.2px;border-radius:50%;background:#8a887c"></div></div>
<div class="t" style="left:985.4px;top:423.9px;font-size:8px;color:#b4b0a0;text-shadow:.6px .6px 0 #fff;letter-spacing:0.679px;">입/출고 운전</div>
<div class="rd" style="left:974.75px;top:440.55px;background:#ece9d8;"></div>
<div class="t" style="left:985.4px;top:439.5px;font-size:8px;color:#b4b0a0;text-shadow:.6px .6px 0 #fff;letter-spacing:0.529px;">입고만 운전</div>
<div class="rd" style="left:974.75px;top:453.95px;background:#ece9d8;"></div>
<div class="t" style="left:985.4px;top:452.9px;font-size:8px;color:#b4b0a0;text-shadow:.6px .6px 0 #fff;letter-spacing:0.529px;">출고만 운전</div>
<div class="rd" style="left:974.75px;top:467.35px;background:#ece9d8;"></div>
<div class="t" style="left:985.4px;top:466.3px;font-size:8px;color:#b4b0a0;text-shadow:.6px .6px 0 #fff;letter-spacing:0.541px;">크래인 운전정지</div>
<div style="left:667.6px;top:491.2px;width:389px;height:28.3px;border:1px solid #cac6b6;border-radius:2px;box-sizing:border-box;box-shadow:0.6px 0.6px 0 #fbfaf6, 0.6px 0.6px 0 #fbfaf6 inset;"></div><div style="left:672.9px;top:488.6px;width:85.1px;height:7px;background:#ece9d8;"></div><div class="t" style="left:675.4px;top:487.9px;font-size:8px;color:#000;-webkit-text-stroke:.1px #000;letter-spacing:0.478px;">입고 바코드 운전 설정</div>
<div class="rd" style="left:690.25px;top:503.75px;background:#fff;"></div>
<div class="t" style="left:700.8px;top:502.7px;font-size:8px;color:#000;-webkit-text-stroke:.1px #000;letter-spacing:0.478px;">바코드 운전정지</div>
<div class="rd" style="left:831.95px;top:503.75px;background:#fff;"><div style="left:1.15px;top:1.15px;width:2.2px;height:2.2px;border-radius:50%;background:#000"></div></div>
<div class="t" style="left:842.5px;top:502.7px;font-size:8px;color:#000;-webkit-text-stroke:.1px #000;letter-spacing:0.422px;">고정식 바코드</div>
<div class="rd" style="left:961.25px;top:503.75px;background:#fff;"></div>
<div class="t" style="left:971.8px;top:502.7px;font-size:8px;color:#000;-webkit-text-stroke:.1px #000;letter-spacing:0.508px;">이동식 바코드</div>
<div style="left:667.6px;top:530.5px;width:389px;height:28.1px;border:1px solid #cac6b6;border-radius:2px;box-sizing:border-box;box-shadow:0.6px 0.6px 0 #fbfaf6, 0.6px 0.6px 0 #fbfaf6 inset;"></div><div style="left:672.9px;top:527.9px;width:85.1px;height:7px;background:#ece9d8;"></div><div class="t" style="left:675.4px;top:527.2px;font-size:8px;color:#000;-webkit-text-stroke:.1px #000;letter-spacing:0.478px;">출고 바코드 운전 설정</div>
<div class="rd" style="left:690.25px;top:542.95px;background:#fff;"></div>
<div class="t" style="left:700.8px;top:541.9px;font-size:8px;color:#000;-webkit-text-stroke:.1px #000;letter-spacing:0.478px;">바코드 운전정지</div>
<div class="rd" style="left:831.95px;top:542.95px;background:#fff;"><div style="left:1.15px;top:1.15px;width:2.2px;height:2.2px;border-radius:50%;background:#000"></div></div>
<div class="t" style="left:842.5px;top:541.9px;font-size:8px;color:#000;-webkit-text-stroke:.1px #000;letter-spacing:0.422px;">고정식 바코드</div>
<div class="rd" style="left:961.25px;top:542.95px;background:#fff;"></div>
<div class="t" style="left:971.8px;top:541.9px;font-size:8px;color:#000;-webkit-text-stroke:.1px #000;letter-spacing:0.508px;">이동식 바코드</div>
<div style="left:667.6px;top:571px;width:389px;height:27.6px;border:1px solid #cac6b6;border-radius:2px;box-sizing:border-box;box-shadow:0.6px 0.6px 0 #fbfaf6, 0.6px 0.6px 0 #fbfaf6 inset;"></div><div style="left:672.9px;top:568.4px;width:93.3px;height:7px;background:#ece9d8;"></div><div class="t" style="left:675.4px;top:567.7px;font-size:8px;color:#000;-webkit-text-stroke:.1px #000;letter-spacing:0.494px;">파레트 바코드 운전 설정</div>
<div class="rd" style="left:690.25px;top:582.95px;background:#fff;"></div>
<div class="t" style="left:700.8px;top:581.9px;font-size:8px;color:#000;-webkit-text-stroke:.1px #000;letter-spacing:0.478px;">바코드 운전정지</div>
<div class="rd" style="left:831.95px;top:582.95px;background:#fff;"><div style="left:1.15px;top:1.15px;width:2.2px;height:2.2px;border-radius:50%;background:#000"></div></div>
<div class="t" style="left:842.5px;top:581.9px;font-size:8px;color:#000;-webkit-text-stroke:.1px #000;letter-spacing:0.422px;">고정식 바코드</div>
<div class="rd" style="left:961.25px;top:582.95px;background:#fff;"></div>
<div class="t" style="left:971.8px;top:581.9px;font-size:8px;color:#000;-webkit-text-stroke:.1px #000;letter-spacing:0.508px;">이동식 바코드</div>
</body></html>
